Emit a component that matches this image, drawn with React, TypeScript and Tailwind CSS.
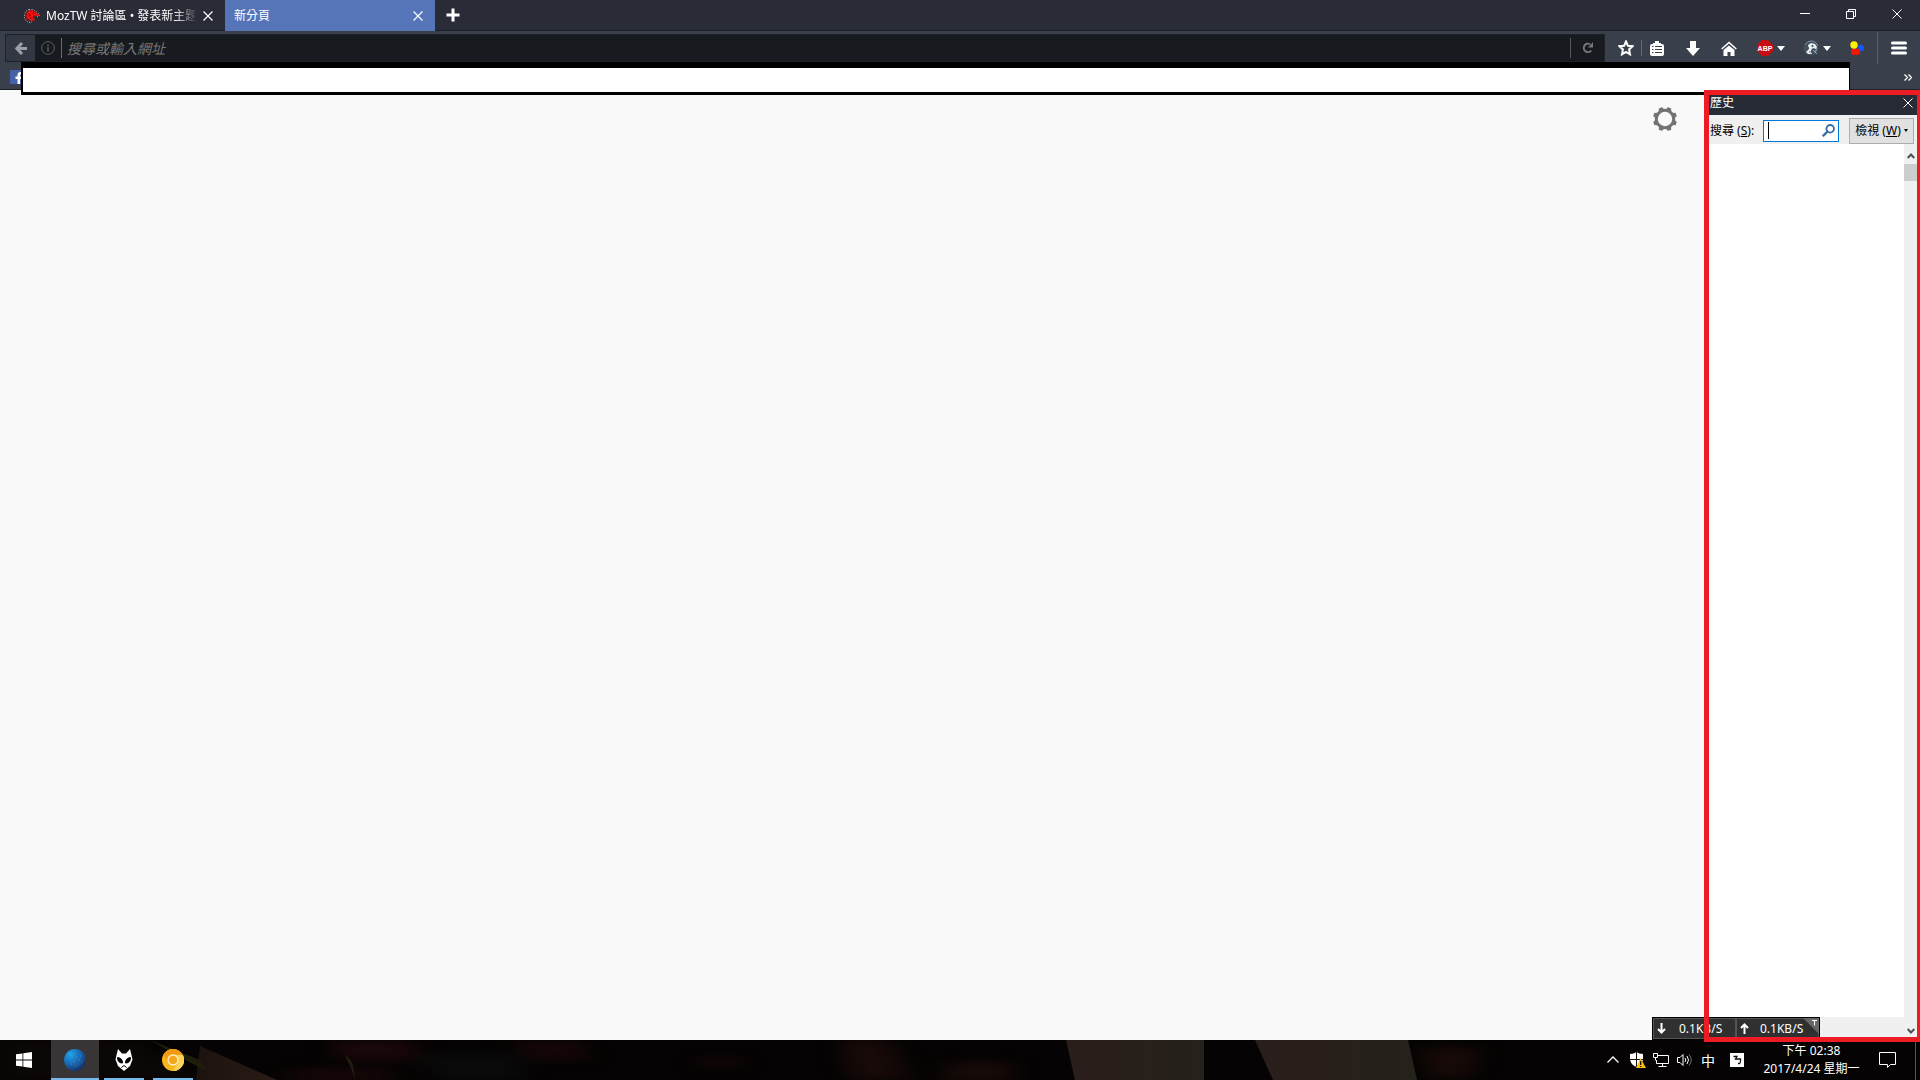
import React from 'react';

const X = ({ s = 10, c = '#fff', w = 1.2 }: { s?: number; c?: string; w?: number }) => (
  <svg width={s} height={s} viewBox="0 0 10 10" fill="none" stroke={c} strokeWidth={w}>
    <path d="M0.5 0.5l9 9M9.5 0.5l-9 9" />
  </svg>
);

const Caret = () => (
  <svg width="8" height="5" viewBox="0 0 8 5" fill="#fff"><path d="M0 0h8L4 5z" /></svg>
);

function TabStrip() {
  return (
    <div className="flex h-[31px] items-stretch border-b border-[#1c1f26] bg-[#292c36] text-white">
      <div className="flex w-[225px] items-center pl-6 pr-3 pt-0.5">
        <svg width="16" height="14" viewBox="0 0 16 14">
          <path d="M5 .5h4l1.500 1 3.500 2.500 1.500 2-1 1.500-3-.5" fill="none" stroke="#ddd" strokeWidth=".8" strokeDasharray="1 1.500" />
          <path d="M5 .5L2 2 .5 5v4L2 12l3 1.500h3" fill="none" stroke="#ddd" strokeWidth=".8" strokeDasharray="1 1.500" />
          <path d="M4 2.500l2-1.500 1 .8L9 1l1 1.500 2 1 3 2-.5 1.500-2.500 0-2-.5-1 1 .5 1.500 1.500 1.500-1 1.500L8 11l.5 2H7l-.5-2L5 12.500 4.500 10 2 10.500 3 8 1 7l2-1.200L2 4z" fill="#ee0d0d" />
          <path d="M9 3.500l1.500 1M5 5l1 2M7 8.500L6 10" stroke="#3a0909" strokeWidth=".8" />
        </svg>
        <span className="ml-1.5 w-[149px] overflow-hidden whitespace-nowrap text-[12px] [mask-image:linear-gradient(to_right,black_86%,transparent_102%)]">MozTW 討論區 • 發表新主題</span>
        <button aria-label="關閉分頁" className="ml-2"><X /></button>
      </div>
      <div className="-mb-px flex w-[210px] items-center justify-between bg-[#5675b9] pl-[9px] pr-3">
        <span className="text-[12px]">新分頁</span>
        <button aria-label="關閉分頁"><X /></button>
      </div>
      <button aria-label="開新分頁" className="ml-[11px]">
        <svg width="14" height="14" viewBox="0 0 14 14" stroke="#fff" strokeWidth="3"><path d="M7 0.500v13M0.500 7h13" /></svg>
      </button>
      <div className="ml-auto flex items-center gap-9 pb-0.5 pr-[18px]">
        <button aria-label="最小化"><svg width="10" height="10" viewBox="0 0 10 10"><path d="M0 4.500h10" stroke="#fff" /></svg></button>
        <button aria-label="還原"><svg width="10" height="10" viewBox="0 0 10 10" fill="none" stroke="#fff"><path d="M.5 2.500h7v7h-7zM2.500 2.500v-2h7v7h-2" /></svg></button>
        <button aria-label="關閉"><X w={1} /></button>
      </div>
    </div>
  );
}

function NavBar() {
  return (
    <div className="flex h-[34px] items-center pl-[5px] pr-[13px]">
      <div className="flex h-7 flex-1 items-center border border-[#1e2228] bg-[#171b1f]">
        <button aria-label="上一頁" className="flex h-full w-[29px] items-center justify-center bg-[#323741]">
          <svg width="12" height="13" viewBox="0 0 12 13" fill="none" stroke="#9b9fa6" strokeWidth="3"><path d="M7 1L1.800 6.500 7 12M2 6.500h10" /></svg>
        </button>
        <button aria-label="網站資訊" className="ml-1.5">
          <svg width="14" height="14" viewBox="0 0 14 14" fill="none" stroke="#5d6063"><circle cx="7" cy="7" r="6.300" /><path d="M7 6v4.500M7 3.500v1.500" strokeWidth="1.500" /></svg>
        </button>
        <span className="ml-1.5 h-5 w-px bg-[#6b6e71]" />
        <input aria-label="搜尋或輸入網址" placeholder="搜尋或輸入網址" className="ml-[5px] min-w-0 flex-1 bg-transparent text-[14px] italic text-white outline-none placeholder:text-[#777]" />
        <span className="h-5 w-px bg-[#55585b]" />
        <button aria-label="重新載入" className="mx-[11px]">
          <svg width="11" height="12" viewBox="0 0 11 12" fill="none" stroke="#75787b" strokeWidth="2"><path d="M8 2.200A4.200 4.200 0 1 0 9.300 8.500" /><path d="M6 5.500h5V0z" fill="#75787b" stroke="none" /></svg>
        </button>
      </div>
      <div className="flex h-full items-center">
        <button aria-label="加入書籤" className="ml-[13px]">
          <svg width="16" height="16" viewBox="0 0 16 16" fill="none" stroke="#fff" strokeWidth="2"><path d="M8 1.500l1.900 4.200 4.600.5-3.400 3.200.9 4.900L8 11.900l-4 2.400.9-4.900L1.500 6.200l4.600-.5z" /></svg>
        </button>
        <span className="ml-[7px] h-4 w-px bg-[#666b77]" />
        <button aria-label="書籤選單" className="ml-2">
          <svg width="14" height="15" viewBox="0 0 14 15"><path d="M5 2V0h4v2h2v1h1q2 0 2 2v8q0 2-2 2H2q-2 0-2-2V5q0-2 2-2h1V2z" fill="#fff" /><path d="M2 5.500h1.500M5 5.500h7M2 8.500h1.500M5 8.500h7M2 11.500h1.500M5 11.500h7" stroke="#3a3f4c" /></svg>
        </button>
        <button aria-label="下載" className="ml-[22px]">
          <svg width="14" height="15" viewBox="0 0 14 15" fill="#fff"><path d="M4 0h6v7h4l-7 8-7-8h4z" /></svg>
        </button>
        <button aria-label="首頁" className="ml-[21px]">
          <svg width="16" height="15" viewBox="0 0 16 15" fill="#fff"><path d="M8 4.500l5.500 4.500v6h-4v-4h-3v4h-4V9z" /><path d="M.7 8L8 1.500 15.300 8" fill="none" stroke="#fff" strokeWidth="1.600" /></svg>
        </button>
        <button aria-label="Adblock Plus" className="ml-5 flex items-center gap-1">
          <svg width="16" height="16" viewBox="0 0 16 16"><path d="M5 0h6l5 5v6l-5 5H5l-5-5V5z" fill="#c70d12" /><text x="8" y="10.500" textAnchor="middle" fontFamily="Liberation Sans" fontWeight="700" fontSize="7" fill="#fff">ABP</text></svg>
          <Caret />
        </button>
        <button aria-label="Greasemonkey" className="ml-[18px] flex items-center gap-1">
          <svg width="16" height="16" viewBox="0 0 16 16"><circle cx="8" cy="8" r="7.500" fill="#40505e" /><path d="M2 5q2-4 6-4 5 0 7 5" fill="none" stroke="#7c8f9c" /><path d="M5 5l3-2 4 1 2 3-1 2-3-1-2 2v2l1 2H5l-2-2 3-3z" fill="#e9eef0" /><path d="M10 10l4 4M14 8l-2 5" stroke="#8fa3b0" /><circle cx="9.500" cy="6" r="1" fill="#30404c" /><path d="M5 7l1 2M6 12h2" stroke="#5b6d78" /></svg>
          <Caret />
        </button>
        <button aria-label="附加元件" className="ml-[19px]">
          <svg width="14" height="14" viewBox="0 0 14 14"><circle cx="10.800" cy="7" r="3.200" fill="#1457f5" /><rect x="1" y="7.500" width="9" height="6.500" rx="3" fill="#f51505" /><circle cx="4" cy="4" r="3.700" fill="#fcf200" /></svg>
        </button>
        <span className="ml-[13px] h-8 w-px bg-[#5a5f6b]" />
        <button aria-label="開啟選單" className="ml-[13px]">
          <svg width="16" height="14" viewBox="0 0 16 14" stroke="#fff" strokeWidth="3" strokeLinecap="round"><path d="M1.500 2h13M1.500 7h13M1.500 12h13" /></svg>
        </button>
      </div>
    </div>
  );
}

function BookmarkBar() {
  return (
    <div className="flex h-[25px] items-center border-b border-[#1f2128] pl-2.5 pr-2">
      <a href="#facebook" aria-label="Facebook">
        <svg width="14" height="14" viewBox="0 0 14 14"><rect width="14" height="14" rx="1" fill="#4561a8" /><path d="M7.500 14V9H5.500V6.500h2V5Q7.500 2 10.500 2H12v2.500h-1q-1 0-1 1v1h2V9h-2v5z" fill="#fff" /></svg>
      </a>
      <button aria-label="更多書籤" className="ml-auto">
        <svg width="8" height="7" viewBox="0 0 8 7" fill="none" stroke="#fff" strokeWidth="1.300"><path d="M.5.5l3 3-3 3M4.500.5l3 3-3 3" /></svg>
      </button>
    </div>
  );
}

function HistorySidebar() {
  return (
    <aside className="flex w-[216px] flex-col bg-white pb-[3px] pl-[5px] pr-[3px] pt-[5px]">
      <div className="flex h-5 items-center justify-between bg-[#272b35] pb-1 pl-px pr-1 text-[12px] text-white">
        <h2>歷史</h2>
        <button aria-label="關閉側邊欄"><X w={1} /></button>
      </div>
      <div className="flex h-[29px] items-center bg-[#f0f0f0] pl-px pr-[3px] pt-0.5 text-[12px] text-black">
        <label htmlFor="history-search" className="w-[53px] whitespace-nowrap">搜尋 (<u>S</u>):</label>
        <div className="flex h-[22px] w-[76px] items-center border border-[#0078d7] bg-white pl-1 pr-[3px]">
          <span className="h-[17px] w-px bg-black" />
          <input id="history-search" className="min-w-0 flex-1 bg-transparent outline-none" />
          <svg width="13" height="13" viewBox="0 0 13 13" fill="none" stroke="#3a6ea5"><circle cx="8.200" cy="4.800" r="3.800" strokeWidth="1.800" /><path d="M5.500 7.500L.8 12.200" strokeWidth="2.400" /></svg>
        </div>
        <button className="ml-auto flex h-[26px] w-[65px] items-center justify-center gap-[3px] whitespace-nowrap border border-[#adadad] bg-[#e1e1e1]">
          <span>檢視 (<u>W</u>)</span>
          <svg width="4" height="3" viewBox="0 0 4 3"><path d="M0 0h4L2 3z" /></svg>
        </button>
      </div>
      <div className="flex min-h-0 flex-1">
        <div className="flex flex-1 flex-col"><div className="flex-1" /><div className="h-5 bg-[#f0f0f0]" /></div>
        <div className="flex w-[13px] flex-col items-center bg-[#f0f0f0]">
          <button aria-label="向上捲動" className="flex h-5 items-center pt-1"><svg width="8" height="6" viewBox="0 0 8 6" fill="none" stroke="#505050" strokeWidth="2"><path d="M.7 5L4 1.500 7.300 5" /></svg></button>
          <div className="h-[17px] w-full bg-[#cdcdcd]" />
          <button aria-label="向下捲動" className="mt-auto flex h-3 items-center"><svg width="8" height="6" viewBox="0 0 8 6" fill="none" stroke="#505050" strokeWidth="2"><path d="M.7 1L4 4.500 7.300 1" /></svg></button>
        </div>
      </div>
    </aside>
  );
}

function SpeedMeter() {
  return (
    <div className="absolute bottom-0 right-[100px] flex h-[23px] w-[168px] border border-black bg-[#303030] text-[12px] text-white">
      <div className="flex flex-1 items-center border border-[#555] pl-[3px]">
        <svg width="9" height="11" viewBox="0 0 9 11" fill="none" stroke="#fff" strokeWidth="2"><path d="M4.500 0v9M1 6l3.500 3.500L8 6" /></svg>
        <span className="ml-[13px]">0.1KB/S</span>
      </div>
      <div className="flex flex-1 items-center border border-[#555] pl-[3px]">
        <svg width="9" height="11" viewBox="0 0 9 11" fill="none" stroke="#fff" strokeWidth="2"><path d="M4.500 11V2M1 5l3.500-3.500L8 5" /></svg>
        <span className="ml-[11px]">0.1KB/S</span>
      </div>
      <svg className="absolute right-0 top-0" width="16" height="16" viewBox="0 0 16 16"><path d="M0 0h16v16z" fill="#666" /><path d="M9 2.500h5M11.500 2.500v5" stroke="#fff" /></svg>
    </div>
  );
}

function Wallpaper() {
  return (
    <svg className="absolute inset-0 h-full w-full" viewBox="0 0 1920 40" preserveAspectRatio="none" aria-hidden="true">
      <defs>
        <linearGradient id="beam"><stop offset="0" stopColor="#2a1e1b" /><stop offset="1" stopColor="#25211b" /></linearGradient>
        <linearGradient id="stem"><stop offset="0" stopColor="#1c120e" /><stop offset="1" stopColor="#2a1c17" /></linearGradient>
        <filter id="soft" colorInterpolationFilters="sRGB"><feGaussianBlur stdDeviation="12 5" /></filter>
      </defs>
      <rect width="1920" height="40" fill="#050303" />
      <g filter="url(#soft)">
        <path d="M0 0h130l70 40H0z" fill="#0b0705" />
        <path d="M330 0h80l10 20h-80zM290 30h100v10H290z" fill="#1a0709" />
        <path d="M420 15h100v25h-80z" fill="#0b0a0a" />
        <path d="M510 0h70l10 20h-60zM700 18h40v10h-40z" fill="#150608" />
        <path d="M840 0h50l20 40h-60zM950 22h60v20h-70z" fill="#170a08" />
        <path d="M1420 8h60l-10 30h-40z" fill="#170a08" />
      </g>
      <path d="M200 6L277 40H196z" fill="url(#stem)" />
      <path d="M150 0l50 20 8 12-30-16z" fill="#1e1d0a" />
      <path d="M345 16q9 2 10 24-4-14-10-24z" fill="#221d10" />
      <path d="M1066 0h138v40h-129z" fill="url(#beam)" />
      <path d="M1255 0h153l9 40h-144z" fill="url(#beam)" />
    </svg>
  );
}

function Taskbar() {
  return (
    <footer className="relative flex h-10 shrink-0 text-white">
      <Wallpaper />
      <div className="relative flex">
        <button aria-label="開始" className="flex w-[51px] items-center justify-center pr-[3px]">
          <svg width="16" height="16" viewBox="0 0 16 16" fill="#fff"><path d="M0 2.300L6.500 1.400v6.200H0zM7.300 1.300L16 0v7.600H7.300zM0 8.400h6.500v6.200L0 13.700zM7.300 8.400H16V16l-8.700-1.300z" /></svg>
        </button>
        <button aria-label="Firefox Nightly" className="flex w-12 items-center justify-center border-b-2 border-[#76b9ed] bg-[#393536] pt-0.5">
          <svg width="22" height="22" viewBox="0 0 22 22"><defs><radialGradient id="globe" cx=".3" cy=".25" r=".9"><stop offset="0" stopColor="#23a4ea" /><stop offset=".5" stopColor="#1767b0" /><stop offset="1" stopColor="#15204e" /></radialGradient></defs><circle cx="11" cy="11" r="11" fill="url(#globe)" /><path d="M12 8h1M15 11h1M10 13h1M14 15h1M17 13h1M11 17h1M7 15h1M16 7h1" stroke="#5586c8" /></svg>
        </button>
        <button aria-label="foobar2000" className="ml-[5px] flex w-10 items-center justify-center border-b-2 border-[#76b9ed] pt-0.5">
          <svg width="18" height="22" viewBox="0 0 18 22"><path d="M3 0l4 4.500h4L15 0l1.500 6 1 4.500L15 17l-6 5-6-5L.5 10.500 1.500 6z" fill="#fff" /><path d="M2.500 8.500q5 .5 5 5.500-5 0-5-5.500zM15.500 8.500q-5 .5-5 5.500 5 0 5-5.500z" fill="#000" stroke="#000" /><path d="M6.500 18.500L9 16.500l2.500 2" stroke="#000" fill="none" /></svg>
        </button>
        <button aria-label="Chrome Canary" className="ml-[9px] flex w-10 items-center justify-center border-b-2 border-[#76b9ed] pt-0.5">
          <svg width="22" height="22" viewBox="0 0 22 22"><circle cx="11" cy="11" r="11" fill="#f6b51c" /><path d="M1.500 5.500A11 11 0 0 1 20.500 5.500L11 6 6 13.500z" fill="#f39a13" /><path d="M11 6h10a11 11 0 0 1-10 16l5-8.500z" fill="#fbd156" /><circle cx="11" cy="11" r="5" fill="#f3a81e" stroke="#fff0c4" strokeWidth="1.300" /></svg>
        </button>
      </div>
      <div className="relative ml-auto flex items-center">
        <button aria-label="顯示隱藏的圖示"><svg width="12" height="8" viewBox="0 0 12 8" fill="none" stroke="#fff" strokeWidth="1.300"><path d="M.5 6.500L6 1l5.500 5.500" /></svg></button>
        <button aria-label="Windows Defender" className="ml-[11px]">
          <svg width="16" height="16" viewBox="0 0 16 16"><path d="M0 2q4 0 6.500-2Q9 2 13 2v5q0 5-6.500 8Q0 12 0 7z" fill="#fff" /><path d="M6.500 0v15M0 7.500h13" stroke="#111" /><path d="M10.500 6l5.500 10H6z" fill="#fdb913" /><path d="M10.700 9v4M10.700 14v1" stroke="#111" strokeWidth="1.300" /></svg>
        </button>
        <button aria-label="網路" className="ml-[7px]"><svg width="16" height="14" viewBox="0 0 16 14" fill="none" stroke="#fff"><path d="M5 2.500h10.500v8H3.500V7M9.500 10.500v3M5.500 13.500h8M.5.5h4v4h-4zM2.500 4.500v3" /></svg></button>
        <button aria-label="音量" className="ml-2"><svg width="16" height="14" viewBox="0 0 16 14" fill="none" stroke="#fff"><path d="M.5 4.500H3l3-3v11l-3-3H.5z" /><path d="M8 5q1.500 2 0 4M10 3q3 4 0 8" /><path d="M12 1.500q4.500 5.500 0 11" stroke="#777" /></svg></button>
        <button className="ml-2 text-[14px]">中</button>
        <button aria-label="注音輸入" className="ml-[15px]"><svg width="14" height="14" viewBox="0 0 14 14"><path fill="#fff" d="M0 0h14v14H0z" /><path d="M3.500 3.500H7L5.500 6h5q0 4.500-1 4.500H8" fill="none" stroke="#111" strokeWidth="1.300" /></svg></button>
        <time className="ml-[18px] w-[99px] whitespace-nowrap text-center text-[12px] leading-[18px]">下午 02:38<br />2017/4/24 星期一</time>
        <button aria-label="重要訊息中心" className="ml-[18px] mr-[19px]"><svg width="17" height="16" viewBox="0 0 17 16" fill="none" stroke="#fff"><path d="M.5.5h16v12h-5l-3 3v-3h-8z" /></svg></button>
        <span className="mr-1 h-10 w-px bg-[#555]" />
      </div>
    </footer>
  );
}

const gearNotches = Array.from({ length: 8 }, (_, i) => i * 45);

export default function App() {
  return (
    <div className="flex h-screen flex-col overflow-hidden bg-[#f9f9f9] font-['Noto_Sans','Noto_Sans_CJK_TC',sans-serif]">
      <header className="relative z-10 bg-[#3a3f4c]">
        <TabStrip />
        <NavBar />
        <BookmarkBar />
        <div className="absolute -bottom-[5px] left-[21px] right-[70px] h-[33px] border-b-[3px] border-l-2 border-r border-t-[6px] border-black bg-white" />
      </header>
      <div className="relative flex min-h-0 flex-1">
        <main className="flex flex-1 items-start justify-end bg-[#f9f9f9]">
          <button aria-label="自訂新分頁" className="mr-[27px] mt-[17px]">
            <svg width="24" height="24" viewBox="0 0 24 24" fill="none">
              <circle cx="12" cy="12" r="9.700" stroke="#737373" strokeWidth="5" />
              {gearNotches.map((a) => (
                <circle key={a} cx="12" cy="-1" r="3" fill="#f9f9f9" transform={`rotate(${a} 12 12)`} />
              ))}
            </svg>
          </button>
        </main>
        <HistorySidebar />
        <SpeedMeter />
      </div>
      <Taskbar />
      <div className="pointer-events-none absolute bottom-[38px] right-0 top-[90px] z-20 w-[216px] border-b-[5px] border-l-[5px] border-r-[3px] border-t-[5px] border-[#ed1c24]" />
    </div>
  );
}
